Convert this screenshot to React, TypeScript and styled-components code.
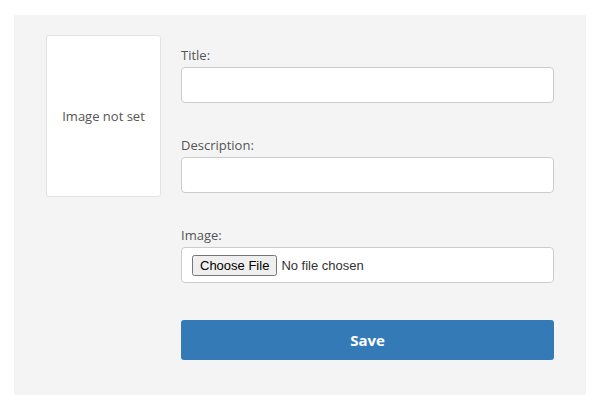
import React from "react";
import styled, { createGlobalStyle } from "styled-components";

const Global = createGlobalStyle`
  html, body { margin: 0; padding: 0; background: #ffffff; }
  body { font-family: "Open Sans", "Liberation Sans", Arial, sans-serif; }
  * { box-sizing: border-box; }
`;

const Panel = styled.div`
  margin: 15px 0 0 14px;
  width: 572px;
  height: 380px;
  background: #f4f4f4;
  padding: 20px 32px 0 32px;
  display: flex;
  align-items: flex-start;
`;

const ImageBox = styled.div`
  width: 115px;
  height: 162px;
  flex: none;
  background: #ffffff;
  border: 1px solid #e3e3e3;
  border-radius: 3px;
  display: flex;
  align-items: center;
  justify-content: center;
  font-size: 13px;
  color: #555555;
  margin-right: 20px;
`;

const Form = styled.form`
  width: 373px;
  padding-top: 11px;
  display: flex;
  flex-direction: column;
`;

const Group = styled.div<{ $gap: number }>`
  display: flex;
  flex-direction: column;
  margin-bottom: ${(p) => p.$gap}px;
`;

const Label = styled.label`
  font-size: 13px;
  line-height: 18px;
  color: #555555;
  margin-bottom: 3px;
`;

const TextInput = styled.input`
  height: 36px;
  width: 100%;
  border: 1px solid #cccccc;
  border-radius: 4px;
  background: #ffffff;
  padding: 6px 12px;
  font-size: 14px;
  outline: none;
`;

const FileBox = styled.div`
  height: 36px;
  width: 100%;
  border: 1px solid #cccccc;
  border-radius: 4px;
  background: #ffffff;
  padding: 0 10px;
  display: flex;
  align-items: center;
`;

const FileInput = styled.input`
  font-family: "Liberation Sans", Arial, sans-serif;
  font-size: 13px;
  color: #333;
`;

const SaveButton = styled.button`
  height: 40px;
  width: 100%;
  border: none;
  border-radius: 3px;
  background: #337ab7;
  color: #ffffff;
  font-family: "Open Sans", sans-serif;
  font-weight: 700;
  font-size: 15px;
  cursor: pointer;
`;

export default function App() {
  return (
    <>
      <Global />
      <Panel>
        <ImageBox>Image not set</ImageBox>
        <Form onSubmit={(e) => e.preventDefault()}>
          <Group $gap={33}>
            <Label>Title:</Label>
            <TextInput type="text" />
          </Group>
          <Group $gap={33}>
            <Label>Description:</Label>
            <TextInput type="text" />
          </Group>
          <Group $gap={37}>
            <Label>Image:</Label>
            <FileBox>
              <FileInput type="file" />
            </FileBox>
          </Group>
          <SaveButton type="submit">Save</SaveButton>
        </Form>
      </Panel>
    </>
  );
}
